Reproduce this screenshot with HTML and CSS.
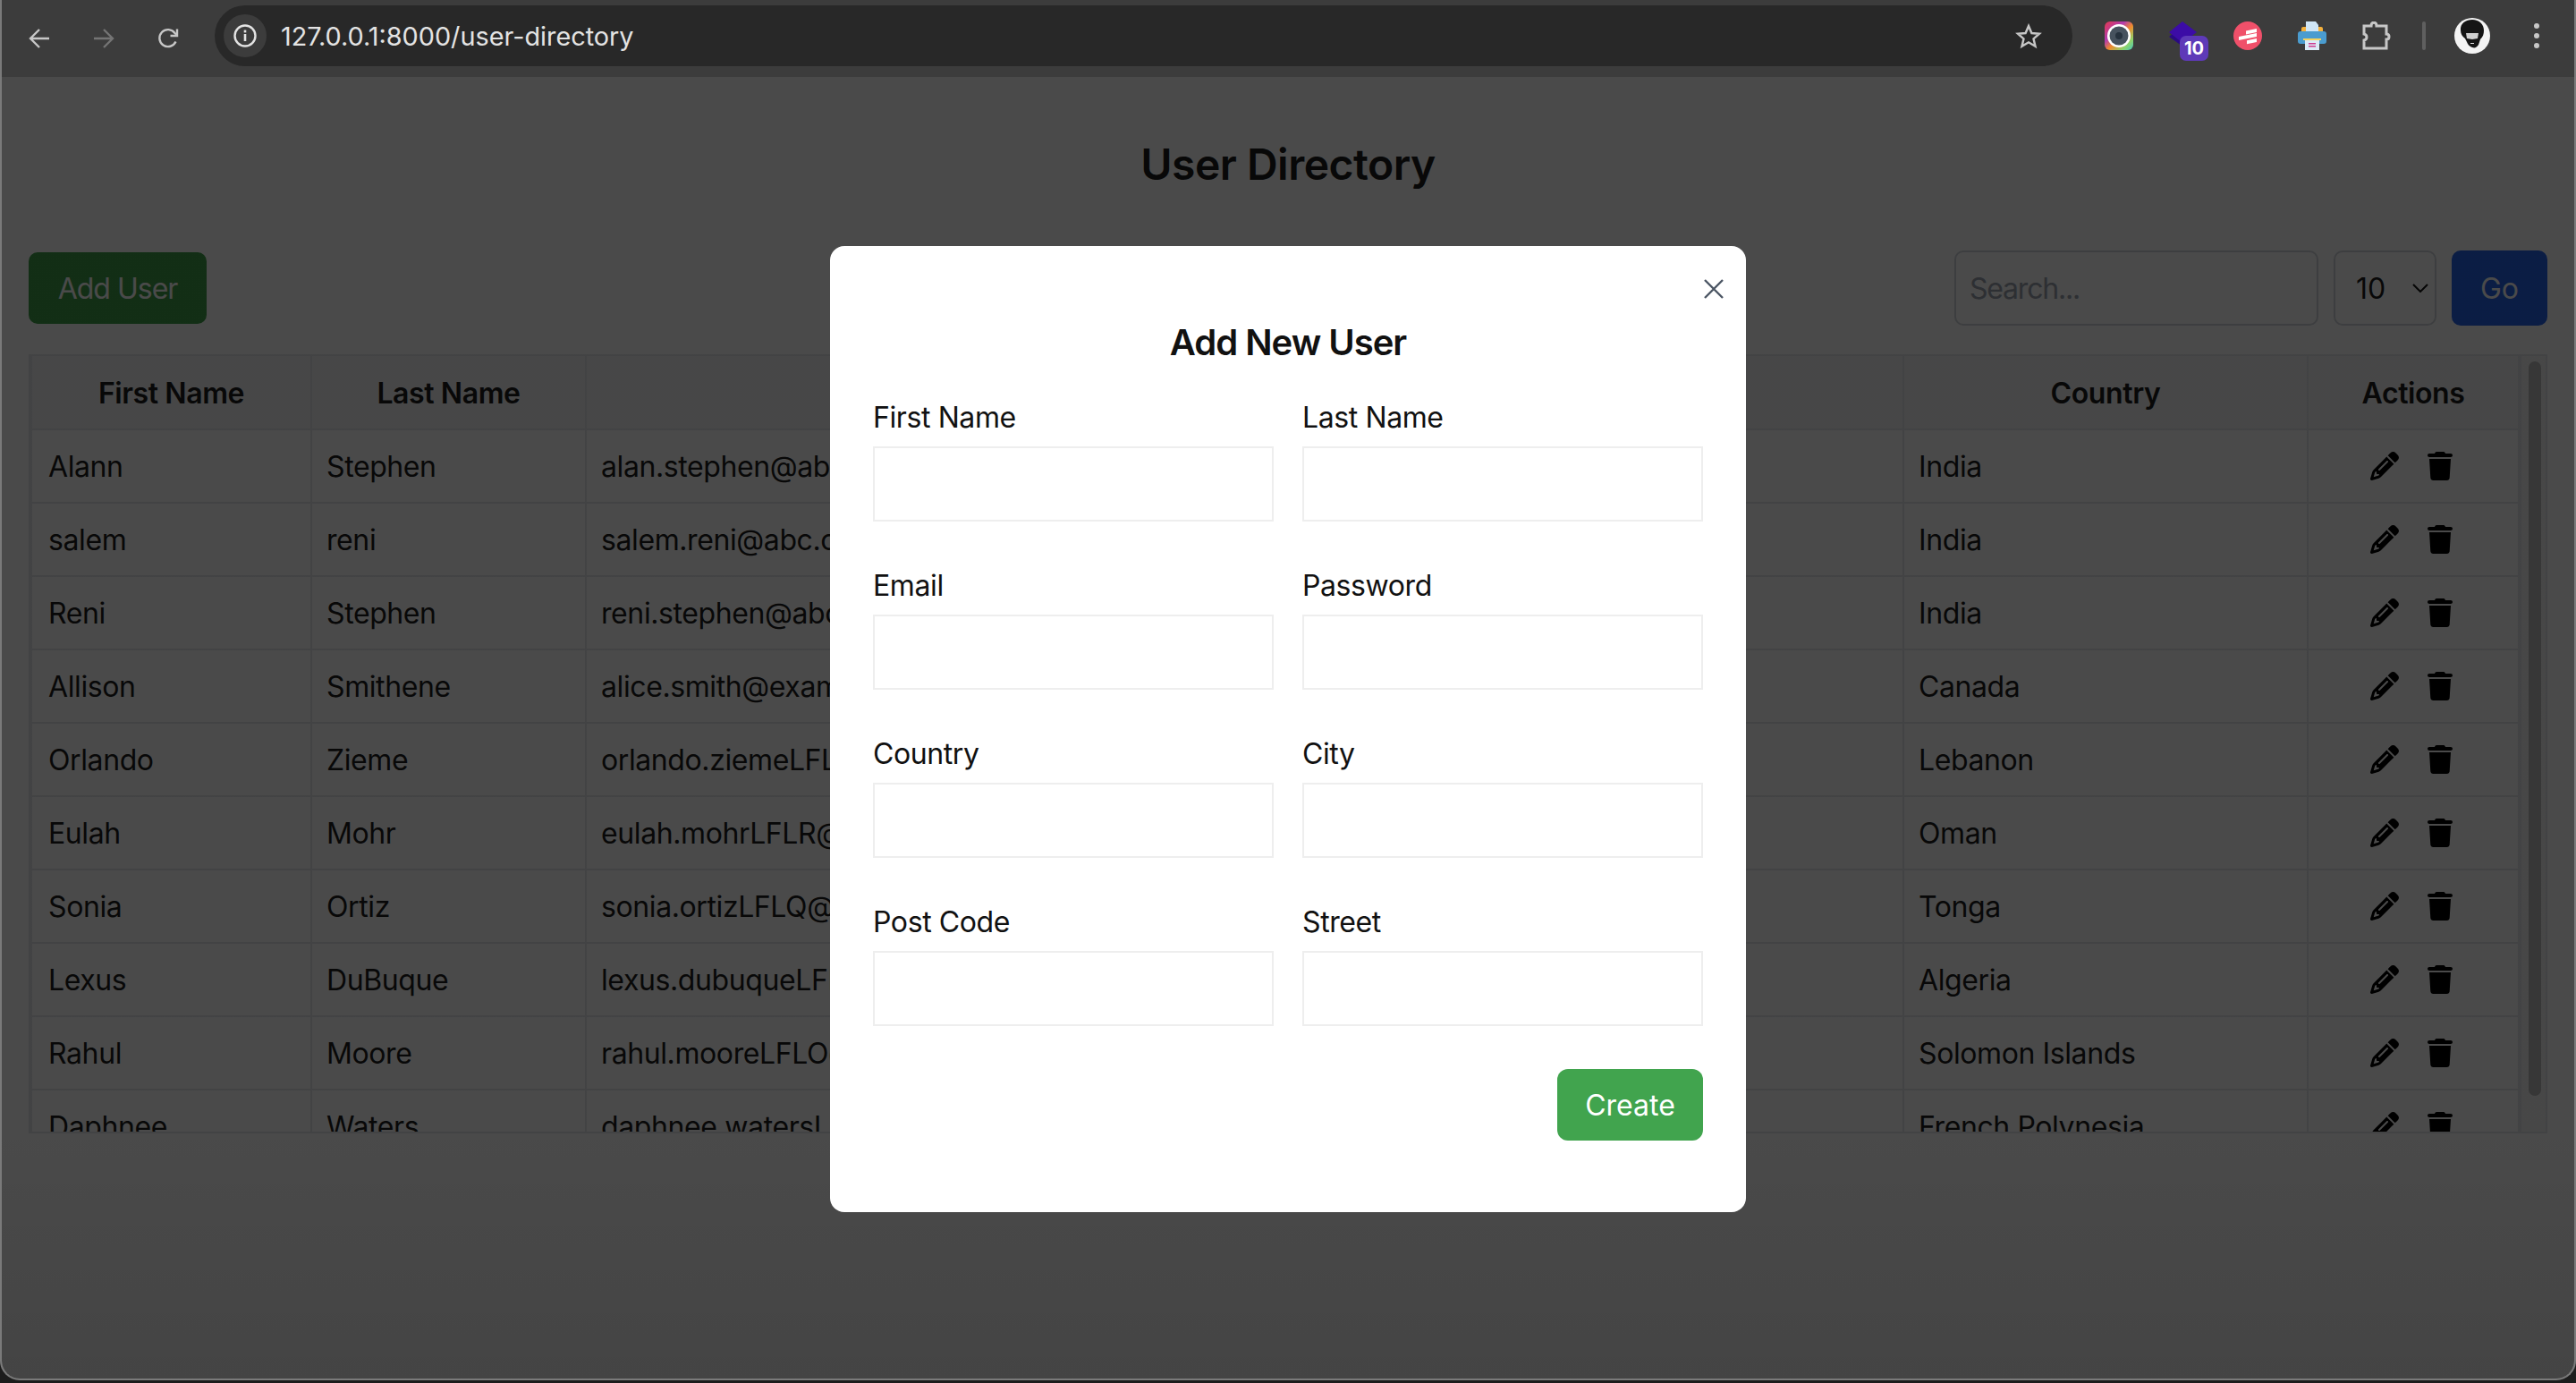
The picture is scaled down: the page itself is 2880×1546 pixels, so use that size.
FILE: index.html
```html
<!DOCTYPE html>
<html lang="en">
<head>
    <meta charset="UTF-8">
    <title>User Directory</title>
    <link rel="stylesheet" href="styles.css">
</head>
<body>
<svg class="sprite" width="0" height="0">
    <symbol id="pencil" viewBox="0 0 512 512"><path d="M410.3 231l11.3-11.3-33.9-33.9-62.1-62.1L291.7 89.8l-11.3 11.3-22.6 22.6L58.6 322.9c-10.4 10.4-18 23.3-22.2 37.4L1 480.7c-2.5 8.4-.2 17.5 6.1 23.7s15.3 8.5 23.7 6.1l120.3-35.4c14.1-4.2 27-11.8 37.4-22.2L387.7 253.7 410.3 231zM160 399.4l-9.1 22.7c-4 3.1-8.5 5.4-13.3 6.9L59.4 452l23-78.1c1.4-4.9 3.8-9.4 6.9-13.3l22.7-9.1v32c0 8.8 7.2 16 16 16h32zM362.7 18.7L348.3 33.2 325.7 55.8 314.3 67.1l33.9 33.9 62.1 62.1 33.9 33.9 11.3-11.3 22.6-22.6 14.5-14.5c25-25 25-65.5 0-90.5L453.3 18.7c-25-25-65.5-25-90.5 0zm-47.4 168l-144 144c-6.2 6.2-16.4 6.2-22.6 0s-6.2-16.4 0-22.6l144-144c6.2-6.2 16.4-6.2 22.6 0s6.2 16.4 0 22.6z"/></symbol>
    <symbol id="trash" viewBox="0 0 448 512"><path d="M135.2 17.7L128 32H32C14.3 32 0 46.3 0 64S14.3 96 32 96H416c17.7 0 32-14.3 32-32s-14.3-32-32-32H320l-7.2-14.3C307.4 6.8 296.3 0 284.2 0H163.8c-12.1 0-23.2 6.8-28.6 17.7zM416 128H32L53.2 467c1.6 25.3 22.6 45 47.9 45H346.9c25.3 0 46.3-19.7 47.9-45L416 128z"/></symbol>
</svg>

<div class="window">
    <header class="chrome">
        <svg class="nav-icon" viewBox="0 0 24 24"><path d="M23 12H2M12 2 2 12l10 10"/></svg>
        <svg class="nav-icon nav-off" viewBox="0 0 24 24"><path d="M1 12h21M12 2l10 10-10 10"/></svg>
        <svg class="nav-icon" viewBox="0 0 24 24"><path d="M20.5 15.5A9.5 9.5 0 1 1 19.5 6L22 8.5"/><path d="M22 1.5v7.5h-7.5"/></svg>

        <div class="omnibox">
            <span class="site-info">
                <svg width="28" height="28" viewBox="0 0 28 28"><circle cx="14" cy="14" r="11.5" fill="none" stroke="#e3e3e3" stroke-width="2.4"/><rect x="12.7" y="12" width="2.6" height="8" fill="#e3e3e3"/><rect x="12.7" y="7.6" width="2.6" height="2.8" fill="#e3e3e3"/></svg>
            </span>
            <span class="url">127.0.0.1:8000/user-directory</span>
            <svg class="star" viewBox="0 0 30 29"><path d="M15 3l3.4 8 8.6.7-6.5 5.7 2 8.4L15 21.3l-7.5 4.5 2-8.4L3 11.7l8.6-.7z"/></svg>
        </div>

        <div class="extensions">
            <svg class="ext" viewBox="0 0 32 32">
                <defs>
                    <linearGradient id="lensbg" x1="0" y1="0" x2="1" y2="1">
                        <stop offset="0" stop-color="#e23a4e"/><stop offset=".35" stop-color="#b23bb0"/><stop offset=".55" stop-color="#f08a2c"/><stop offset=".8" stop-color="#8ed46c"/><stop offset="1" stop-color="#45c8c0"/>
                    </linearGradient>
                </defs>
                <rect width="32" height="32" rx="6" fill="url(#lensbg)"/>
                <circle cx="16" cy="16" r="13" fill="#fff"/>
                <circle cx="16" cy="16" r="10.5" fill="#46525e"/>
                <circle cx="16" cy="16" r="4" fill="#26323e"/>
            </svg>
            <span class="ext-wrap">
                <svg class="ext" viewBox="0 0 32 32"><path d="M0 17 9 10l14 8-9 9z" fill="#2a0a82"/><path d="M15 0l16 12-16 12L0 12z" fill="#3c0ca6"/></svg>
                <span class="badge">10</span>
            </span>
            <svg class="ext" viewBox="0 0 32 32">
                <circle cx="16" cy="16" r="16" fill="#f0506a"/>
                <path d="M14 10.500 26 8v4L14 14.500zM6 17l20-4v4L6 21zM15 21.200 26 19v4L15 25.200z" fill="#fff"/>
            </svg>
            <svg class="ext" viewBox="0 0 32 32">
                <rect x="4" y="6" width="24" height="8" rx="2" fill="#f4b13c"/>
                <path d="M9 0h11l3 4v12H9z" fill="#cfe6f7"/>
                <rect y="11" width="32" height="14" rx="3" fill="#4a9ccf"/>
                <rect x="6" y="19" width="20" height="2" fill="#f4d35e"/>
                <rect x="8" y="21" width="16" height="11" fill="#dcebf7"/>
                <path d="M12 24h8v1.500h-8zM12 27h8v1.500h-8z" fill="#cf3c8e"/>
            </svg>
            <svg class="ext puzzle" viewBox="0 0 32 32"><path d="M2 5h8c0-5 6-5 6 0h11v9c4 0 4 6 0 6v10H2v-9c4-1 4-6 0-7z"/></svg>
            <span class="divider"></span>
            <svg class="avatar" viewBox="0 0 40 40">
                <circle cx="20" cy="20" r="20" fill="#f4f4f4"/>
                <path d="M7 14C6 6 13 2 20 2c8 0 13 5 13 12 0 4-1 7-4 10l-2 6c-2 3-4 4-7 3-3-1-5-3-6-6l-2-4c-3-2-5-5-5-9z" fill="#151515"/>
                <path d="M13 17h14l-1 6-6 1-6-1z" fill="#cfcfcf"/>
                <path d="M18 28h4v1h-4z" fill="#e6e6e6"/>
            </svg>
            <svg class="dots" viewBox="0 0 6 28"><circle cx="3" cy="3" r="3"/><circle cx="3" cy="14" r="3"/><circle cx="3" cy="25" r="3"/></svg>
        </div>
    </header>

    <main class="page">
        <h1 class="page-title">User Directory</h1>

        <div class="toolbar">
            <button class="btn btn-green">Add User</button>
            <div class="filters">
                <input class="search" type="text" placeholder="Search...">
                <div class="per-page">
                    <span>10</span>
                    <svg width="18" height="10" viewBox="0 0 18 10"><path d="M1 1l8 8 8-8" fill="none" stroke="#111" stroke-width="2"/></svg>
                </div>
                <button class="btn btn-blue">Go</button>
            </div>
        </div>

        <div class="table-box">
            <table class="users">
                <colgroup>
                    <col class="col-first"><col class="col-last"><col class="col-email"><col class="col-country"><col class="col-actions">
                </colgroup>
                <thead>
                    <tr><th>First Name</th><th>Last Name</th><th>Email</th><th>Country</th><th>Actions</th></tr>
                </thead>
                <tbody>
                    <tr><td>Alann</td><td>Stephen</td><td>alan.stephen@abc.com</td><td>India</td><td><div class="actions"><svg class="act-pencil"><use href="#pencil"/></svg><svg class="act-trash"><use href="#trash"/></svg></div></td></tr>
                    <tr><td>salem</td><td>reni</td><td>salem.reni@abc.com</td><td>India</td><td><div class="actions"><svg class="act-pencil"><use href="#pencil"/></svg><svg class="act-trash"><use href="#trash"/></svg></div></td></tr>
                    <tr><td>Reni</td><td>Stephen</td><td>reni.stephen@abc.com</td><td>India</td><td><div class="actions"><svg class="act-pencil"><use href="#pencil"/></svg><svg class="act-trash"><use href="#trash"/></svg></div></td></tr>
                    <tr><td>Allison</td><td>Smithene</td><td>alice.smith@example.com</td><td>Canada</td><td><div class="actions"><svg class="act-pencil"><use href="#pencil"/></svg><svg class="act-trash"><use href="#trash"/></svg></div></td></tr>
                    <tr><td>Orlando</td><td>Zieme</td><td>orlando.ziemeLFLX@example.net</td><td>Lebanon</td><td><div class="actions"><svg class="act-pencil"><use href="#pencil"/></svg><svg class="act-trash"><use href="#trash"/></svg></div></td></tr>
                    <tr><td>Eulah</td><td>Mohr</td><td>eulah.mohrLFLR@example.org</td><td>Oman</td><td><div class="actions"><svg class="act-pencil"><use href="#pencil"/></svg><svg class="act-trash"><use href="#trash"/></svg></div></td></tr>
                    <tr><td>Sonia</td><td>Ortiz</td><td>sonia.ortizLFLQ@example.com</td><td>Tonga</td><td><div class="actions"><svg class="act-pencil"><use href="#pencil"/></svg><svg class="act-trash"><use href="#trash"/></svg></div></td></tr>
                    <tr><td>Lexus</td><td>DuBuque</td><td>lexus.dubuqueLFLP@example.net</td><td>Algeria</td><td><div class="actions"><svg class="act-pencil"><use href="#pencil"/></svg><svg class="act-trash"><use href="#trash"/></svg></div></td></tr>
                    <tr><td>Rahul</td><td>Moore</td><td>rahul.mooreLFLO@example.org</td><td>Solomon Islands</td><td><div class="actions"><svg class="act-pencil"><use href="#pencil"/></svg><svg class="act-trash"><use href="#trash"/></svg></div></td></tr>
                    <tr><td>Daphnee</td><td>Waters</td><td>daphnee.watersLFLN@example.com</td><td>French Polynesia</td><td><div class="actions"><svg class="act-pencil"><use href="#pencil"/></svg><svg class="act-trash"><use href="#trash"/></svg></div></td></tr>
                </tbody>
            </table>
            <div class="scroll-track"><div class="scroll-thumb"></div></div>
        </div>

        <div class="overlay">
            <div class="modal">
                <svg class="close" viewBox="0 0 22 22"><path d="M1 1l20 20M21 1 1 21"/></svg>
                <h2 class="modal-title">Add New User</h2>
                <form class="user-form">
                    <div class="field"><label for="first">First Name</label><input id="first" type="text"></div>
                    <div class="field"><label for="last">Last Name</label><input id="last" type="text"></div>
                    <div class="field"><label for="email">Email</label><input id="email" type="text"></div>
                    <div class="field"><label for="password">Password</label><input id="password" type="text"></div>
                    <div class="field"><label for="country">Country</label><input id="country" type="text"></div>
                    <div class="field"><label for="city">City</label><input id="city" type="text"></div>
                    <div class="field"><label for="post">Post Code</label><input id="post" type="text"></div>
                    <div class="field"><label for="street">Street</label><input id="street" type="text"></div>
                </form>
                <div class="modal-foot"><button class="btn btn-create">Create</button></div>
            </div>
        </div>
    </main>
</div>
</body>
</html>
```

FILE: styles.css
```css
* {
    box-sizing: border-box;
}
html, body {
    margin: 0;
    height: 100%;
    background: #1c1c1c;
}
body {
    font-family: Inter, "Liberation Sans", sans-serif;
    font-size: 32px;
    letter-spacing: -0.4px;
    color: #1a1a1a;
    overflow: hidden;
}
.sprite {
    display: block;
    height: 0;
}
.window {
    height: 1543px;
    display: flex;
    flex-direction: column;
    border: solid #7a7a7a;
    border-width: 0 2px 2px;
    border-radius: 0 0 22px 22px;
    overflow: hidden;
}

/* browser bar */
.chrome {
    height: 86px;
    flex: none;
    display: flex;
    align-items: center;
    padding: 0 39px 0 30px;
    background: #3c3c3c;
}
.nav-icon {
    width: 24px;
    height: 24px;
    margin-right: 48px;
    fill: none;
    stroke: #c7c7c7;
    stroke-width: 2.4;
}
.nav-off {
    stroke: #747474;
}
.nav-icon:nth-child(3) {
    margin-right: 40px;
}
.omnibox {
    flex: 1;
    height: 68px;
    margin-top: -6px;
    display: flex;
    align-items: center;
    padding: 0 34px 0 10px;
    border-radius: 34px;
    background: #282828;
}
.site-info {
    width: 48px;
    height: 48px;
    display: flex;
    align-items: center;
    justify-content: center;
    border-radius: 50%;
    background: #3c3c3c;
}
.url {
    flex: 1;
    margin-left: 16px;
    font-size: 28.800px;
    letter-spacing: 0;
    color: #e3e3e3;
}
.star {
    width: 30px;
    height: 29px;
    fill: none;
    stroke: #c7c7c7;
    stroke-width: 2.4;
}
.extensions {
    display: flex;
    align-items: center;
    gap: 40px;
    margin-left: 36px;
    margin-top: -6px;
}
.ext {
    width: 32px;
    height: 32px;
    display: block;
}
.ext-wrap {
    position: relative;
    width: 32px;
    height: 32px;
}
.badge {
    position: absolute;
    left: 12px;
    top: 16px;
    width: 32px;
    height: 28px;
    border-radius: 7px;
    background: #5e3ab8;
    color: #fff;
    font-size: 20px;
    font-weight: 700;
    line-height: 28px;
    letter-spacing: 0;
    text-align: center;
}
.puzzle {
    fill: none;
    stroke: #c7c7c7;
    stroke-width: 3;
}
.divider {
    width: 4px;
    height: 32px;
    margin-left: -5px;
    border-radius: 2px;
    background: #5f5f5f;
}
.avatar {
    width: 40px;
    height: 40px;
    margin-left: -8px;
}
.dots {
    width: 6px;
    height: 28px;
    margin-left: 9px;
    fill: #c7c7c7;
}

/* the page under the overlay */
.page {
    position: relative;
    flex: 1;
    padding: 0 30px;
    background: #fff;
}
.page-title {
    margin: 0;
    padding-top: 68px;
    height: 194px;
    font-size: 48px;
    line-height: 60px;
    font-weight: 600;
    letter-spacing: -0.5px;
    text-align: center;
}
.toolbar {
    display: flex;
    align-items: center;
    justify-content: space-between;
    height: 84px;
}
.filters {
    display: flex;
    gap: 17px;
}
.btn {
    height: 80px;
    padding: 0;
    border: none;
    border-radius: 10px;
    color: #fff;
    font: inherit;
    letter-spacing: 0;
    white-space: nowrap;
}
.btn-green {
    width: 199px;
    letter-spacing: -1px;
    background: #3f9f49;
}
.btn-blue {
    width: 107px;
    height: 84px;
    background: #2563eb;
}
.search {
    width: 407px;
    height: 84px;
    padding: 0 15px;
    border: 2px solid #d1d5db;
    border-radius: 10px;
    font: inherit;
    letter-spacing: -1.2px;
}
.search::placeholder {
    color: #9ca3af;
}
.per-page {
    width: 115px;
    height: 84px;
    display: flex;
    align-items: center;
    justify-content: space-between;
    padding: 0 7px 0 23px;
    border: 2px solid #d1d5db;
    border-radius: 10px;
    letter-spacing: 0;
}
.table-box {
    display: flex;
    height: 871px;
    margin-top: 32px;
    border: 2px solid #e5e7eb;
    overflow: hidden;
}
.users {
    width: 2781px;
    height: 0;
    flex: none;
    table-layout: fixed;
    border-collapse: collapse;
}
.col-first { width: 313px; }
.col-last { width: 307px; }
.col-email { width: 1473px; }
.col-country { width: 452px; }
.col-actions { width: 236px; }
.users th {
    height: 82px;
    padding-top: 2px;
    font-weight: 600;
    background: #f3f4f6;
    border: 2px solid #e5e7eb;
    border-top: none;
}
.users td {
    height: 82px;
    padding: 0 16px;
    border: 2px solid #e5e7eb;
    white-space: nowrap;
    overflow: hidden;
}
.users td:first-child {
    padding-left: 18px;
}
.actions {
    display: flex;
    justify-content: center;
    gap: 32px;
    margin-right: 4px;
}
.act-pencil {
    width: 32px;
    height: 32px;
}
.act-trash {
    width: 28px;
    height: 32px;
}
.scroll-track {
    width: 32px;
    flex: none;
    padding: 6px 8px;
    background: #f5f5f5;
    border-left: 2px solid #e5e7eb;
}
.scroll-thumb {
    height: 821px;
    border-radius: 8px;
    background: #bcbcbc;
}

/* dimmed layer and dialog */
.overlay {
    position: absolute;
    inset: 0;
    padding-top: 3px;
    display: flex;
    align-items: center;
    justify-content: center;
    background: linear-gradient(rgba(0, 0, 0, .71), rgba(0, 0, 0, .71) 80%, rgba(0, 0, 0, .735));
}
.modal {
    position: relative;
    width: 1024px;
    height: 1080px;
    padding: 75px 48px 0;
    border-radius: 16px;
    background: #fff;
    color: #111;
}
.close {
    position: absolute;
    top: 37px;
    right: 25px;
    width: 22px;
    height: 22px;
    fill: none;
    stroke: #4b5563;
    stroke-width: 2.4;
}
.modal-title {
    margin: 0;
    height: 93px;
    font-size: 40px;
    line-height: 66px;
    font-weight: 600;
    letter-spacing: -1px;
    text-align: center;
}
.user-form {
    display: grid;
    grid-template-columns: 448px 448px;
    gap: 48px 32px;
}
.field label {
    display: block;
    height: 56px;
    line-height: 48px;
}
.field input {
    display: block;
    width: 100%;
    height: 84px;
    border: 2px solid #eeeeee;
    background: #fff;
}
.modal-foot {
    display: flex;
    justify-content: flex-end;
    margin-top: 48px;
}
.btn-create {
    width: 163px;
    border-radius: 12px;
    background: #41a44e;
}
```
